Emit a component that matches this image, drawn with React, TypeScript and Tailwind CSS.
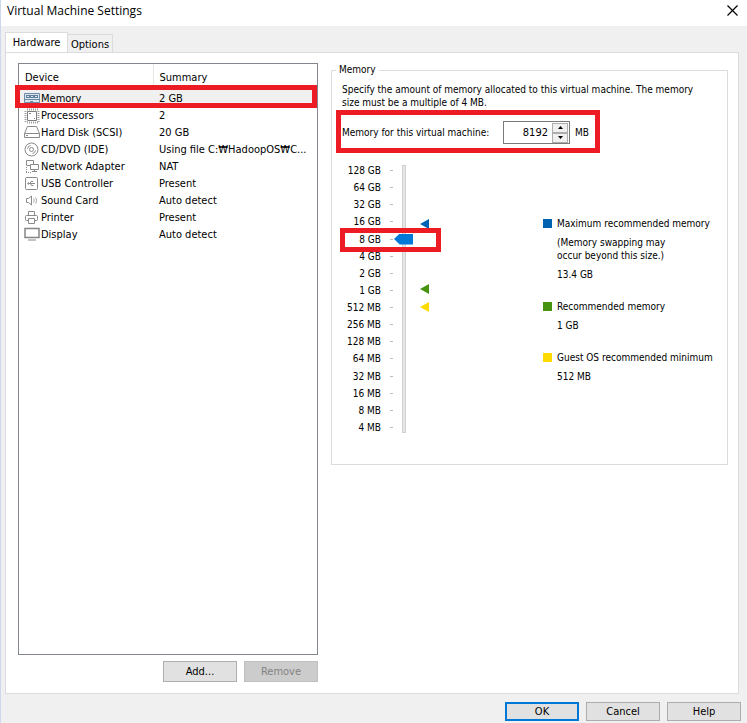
import { useState } from "react";
import type { ReactNode } from "react";

type Device = {
  name: string;
  summary: string;
  icon: ReactNode;
};

const devices: Device[] = [
  {
    name: "Memory",
    summary: "2 GB",
    icon: (
      <>
        <path d="M.5 2.500h15v9H.5z" fill="#dbe7f0" stroke="#6d8aa5" />
        <path d="M2 4h12v3H2z" fill="#5f7f9c" />
        <path d="M3 5h2v1H3zM7 5h2v1H7zM11 5h2v1h-2z" fill="#dbe7f0" />
        <path d="M1 8.500h14M6 10.500h3" stroke="#6d8aa5" />
      </>
    ),
  },
  {
    name: "Processors",
    summary: "2",
    icon: (
      <g fill="none">
        <path d="M3 1.500h11M3 14.500h11" stroke="#a0a0a0" strokeWidth="2" strokeDasharray="1 1" />
        <path d="M1.500 3v11M14.500 3v11" stroke="#a0a0a0" strokeWidth="2" strokeDasharray="1 1" />
        <path d="M3.500 3.500h9v9h-9z" fill="#fff" stroke="#808080" />
        <path d="M5 5.500h2M10 10.500h1" stroke="#808080" />
      </g>
    ),
  },
  {
    name: "Hard Disk (SCSI)",
    summary: "20 GB",
    icon: (
      <g stroke="#8a8a8a" fill="#fff">
        <path d="M3.500 1.500h9l3 7v4H.5v-4z" />
        <path d="M.5 8.500h15M2 10.500h2" />
      </g>
    ),
  },
  {
    name: "CD/DVD (IDE)",
    summary: "Using file C:₩HadoopOS₩C...",
    icon: (
      <g stroke="#8a8a8a" fill="none">
        <circle cx="7.500" cy="7.500" r="6.500" />
        <circle cx="7.500" cy="7.500" r="2" />
        <path d="M3.500 6.500a4 4 0 0 1 3-3M11.500 8.500a4 4 0 0 1-3 3" />
      </g>
    ),
  },
  {
    name: "Network Adapter",
    summary: "NAT",
    icon: (
      <g stroke="#8a8a8a" fill="none">
        <path d="M2.500 1.500h7v5h-7z" />
        <path d="M6.500 5.500h8v5h-8z" fill="#fff" />
        <path d="M10.500 11v2M8 12.500h5" />
        <path d="M2.500 8v5M2 13.500h6" strokeDasharray="1 1" />
      </g>
    ),
  },
  {
    name: "USB Controller",
    summary: "Present",
    icon: (
      <g stroke="#8a8a8a" fill="none">
        <rect x="1.500" y="1.500" width="12" height="12" rx="1" />
        <path d="M4 7.500h7M6 7.500l1-2h2M6.500 7.500l1 2h2" />
        <circle cx="4.500" cy="7.500" r=".7" fill="#8a8a8a" />
      </g>
    ),
  },
  {
    name: "Sound Card",
    summary: "Auto detect",
    icon: (
      <g stroke="#8a8a8a" fill="none">
        <path d="M2.500 5.500v4h2l3 2.500V3L4.500 5.500z" />
        <path d="M9.500 5.500c.8 1 .8 3 0 4M11.500 4.500c1.300 1.600 1.300 4.400 0 6" stroke="#a5a5a5" />
      </g>
    ),
  },
  {
    name: "Printer",
    summary: "Present",
    icon: (
      <g stroke="#8a8a8a" fill="#fff">
        <path d="M4.500 5.500v-4h6v4" />
        <rect x="1.500" y="5.500" width="12" height="5" rx="1" />
        <path d="M4.500 8.500h6v5h-6z" />
      </g>
    ),
  },
  {
    name: "Display",
    summary: "Auto detect",
    icon: (
      <g stroke="#858585" fill="#fff">
        <path d="M1 1.500h14v9H1z" strokeWidth="1.500" />
        <path d="M4 13h8" />
      </g>
    ),
  },
];

const sizes = [
  "128 GB", "64 GB", "32 GB", "16 GB", "8 GB", "4 GB", "2 GB", "1 GB",
  "512 MB", "256 MB", "128 MB", "64 MB", "32 MB", "16 MB", "8 MB", "4 MB",
];

function Marker({ className }: { className: string }) {
  return (
    <svg viewBox="0 0 9 10" className={`w-[9px] h-[10px] ${className}`}>
      <path d="M0 5L9 0v10z" fill="currentColor" />
    </svg>
  );
}

function Button({ children, className = "", disabled }: { children: ReactNode; className?: string; disabled?: boolean }) {
  return (
    <button
      type="button"
      disabled={disabled}
      className={`w-[74px] border border-[#adadad] bg-[#e1e1e1] text-center disabled:border-[#bfbfbf] disabled:bg-[#cccccc] disabled:text-[#838383] ${className}`}
    >
      {children}
    </button>
  );
}

function DeviceList() {
  const [selected, setSelected] = useState("Memory");

  return (
    <div className="flex-1 border border-[#828790] bg-white">
      <table className="w-full table-fixed text-left">
        <thead>
          <tr className="h-[26px]">
            <th className="w-[134px] border-r border-[#e5e5e5] pl-[6px] font-normal">Device</th>
            <th className="pl-[6px] font-normal">Summary</th>
          </tr>
        </thead>
        <tbody>
          {devices.map((item) => (
            <tr
              key={item.name}
              onClick={() => setSelected(item.name)}
              className={`relative h-[17px] ${selected === item.name ? "bg-[#f0f0f0]" : ""}`}
            >
              <td className="p-0">
                <div className="flex items-center gap-px pl-[5px]">
                  <svg viewBox="0 0 16 16" className="w-4 h-4 shrink-0">{item.icon}</svg>
                  {item.name}
                </div>
                {selected === item.name && (
                  <span className="absolute -left-1 right-0 -top-[5px] -bottom-px border-[5px] border-[#ed1c24]"></span>
                )}
              </td>
              <td className="p-0 pl-[6px] whitespace-nowrap">{item.summary}</td>
            </tr>
          ))}
        </tbody>
      </table>
    </div>
  );
}

function MemoryPanel() {
  const [memory, setMemory] = useState("8192");
  const level = Math.round(Math.log2(Number(memory) || 4)) - 2;

  const step = (amount: number) => setMemory(String(Number(memory) + amount));

  return (
    <fieldset className="flex-1 min-w-0 self-start border border-[#dcdcdc] pl-[10px] pr-3 pb-[30px] text-[10px] leading-[13px]">
      <legend className="-ml-[6px] px-[3px] leading-[14px]">Memory</legend>
      <p className="pt-[6px] pr-2">
        Specify the amount of memory allocated to this virtual machine. The memory size must be a multiple of 4 MB.
      </p>

      <div className="relative mt-3 flex w-fit items-center">
        <label htmlFor="memory" className="w-[161px] whitespace-nowrap">Memory for this virtual machine:</label>
        <div className="flex h-[23px] w-[67px] items-center border border-[#7a7a7a] bg-white pr-px">
          <input
            id="memory"
            type="text"
            value={memory}
            onChange={(e) => setMemory(e.target.value)}
            className="w-full min-w-0 flex-1 pr-1 text-right text-[11px] outline-none"
          />
          <div className="flex w-4 flex-col">
            <button type="button" aria-label="Increase" onClick={() => step(4)} className="flex h-[10px] items-center justify-center border border-[#adadad] bg-[#f0f0f0]">
              <svg viewBox="0 0 5 3" className="h-[3px] w-[5px]"><path d="M0 3L2.500 0 5 3z" /></svg>
            </button>
            <button type="button" aria-label="Decrease" onClick={() => step(-4)} className="flex h-[10px] items-center justify-center border border-[#adadad] bg-[#f0f0f0]">
              <svg viewBox="0 0 5 3" className="h-[3px] w-[5px]"><path d="M0 0h5L2.500 3z" /></svg>
            </button>
          </div>
        </div>
        <span className="ml-[5px] w-[19px]">MB</span>
        <span className="pointer-events-none absolute -left-[6px] -right-[6px] -top-[11px] -bottom-[9px] border-[5px] border-[#ed1c24]"></span>
      </div>

      <div className="relative mt-5 flex">
        <div className="flex h-[270px] w-[39px] shrink-0 flex-col justify-between text-right whitespace-nowrap">
          {sizes.map((size) => (
            <span key={size}>{size}</span>
          ))}
        </div>
        <div className="ml-2 flex h-[270px] w-1 shrink-0 flex-col items-end justify-between py-[6px]">
          {sizes.map((size) => (
            <span key={size} className="h-px w-[3px] bg-[#bdbdbd]"></span>
          ))}
        </div>
        <div className="ml-px mt-px grid h-[268px] w-[19px] shrink-0">
          <span className="col-start-1 row-start-1 w-1 justify-self-center border border-[#d0d0d0] bg-[#e7e7e7]"></span>
          <input
            type="range"
            aria-label="Memory size"
            min={0}
            max={15}
            value={level}
            onChange={(e) => setMemory(String(2 ** (Number(e.target.value) + 2)))}
            className="col-start-1 row-start-1 h-[268px] w-[19px] appearance-none bg-transparent [direction:rtl] [writing-mode:vertical-lr] [&::-webkit-slider-thumb]:h-[11px] [&::-webkit-slider-thumb]:w-[19px] [&::-webkit-slider-thumb]:appearance-none [&::-webkit-slider-thumb]:bg-[#0078d7] [&::-webkit-slider-thumb]:[clip-path:polygon(0_50%,30%_0,100%_0,100%_100%,30%_100%)]"
          />
        </div>
        <div className="ml-[7px] flex shrink-0 flex-col">
          <Marker className="mt-[55px] text-[#0063b1]" />
          <Marker className="mt-[55px] text-[#47920f]" />
          <Marker className="mt-2 text-[#fddb00]" />
        </div>
        <div className="ml-[114px] pt-[53px] whitespace-nowrap">
          <div className="flex items-center gap-[5px]">
            <span className="h-[9px] w-[9px] bg-[#0063b1]"></span>Maximum recommended memory
          </div>
          <p className="mt-[6px] pl-[14px]">(Memory swapping may<br />occur beyond this size.)</p>
          <p className="mt-[6px] pl-[14px]">13.4 GB</p>
          <div className="mt-[19px] flex items-center gap-[5px]">
            <span className="h-[9px] w-[9px] bg-[#47920f]"></span>Recommended memory
          </div>
          <p className="mt-[6px] pl-[14px]">1 GB</p>
          <div className="mt-[19px] flex items-center gap-[5px]">
            <span className="h-[9px] w-[9px] bg-[#fddb00]"></span>Guest OS recommended minimum
          </div>
          <p className="mt-[6px] pl-[14px]">512 MB</p>
        </div>
        <span className="pointer-events-none absolute -left-[2px] top-16 h-6 w-[101px] border-[5px] border-[#ed1c24]"></span>
      </div>
    </fieldset>
  );
}

function App() {
  return (
    <div className="flex min-h-screen flex-col border-l border-[#ccd8ec] bg-[#f0f0f0] font-['DejaVu_Sans_Condensed','Noto_Sans','Noto_Sans_CJK_KR',sans-serif] text-[11px] leading-[13px] text-black">
      <header className="flex h-[26px] items-start justify-between bg-white pl-[6px] pr-[9px]">
        <h1 className="pt-[2px] font-['Open_Sans',sans-serif] text-[12px] leading-[18px]">Virtual Machine Settings</h1>
        <button type="button" aria-label="Close" className="pt-[5px]">
          <svg viewBox="0 0 11 11" className="h-[11px] w-[11px]">
            <path d="M.5.5l10 10M10.500.5l-10 10" stroke="#000" strokeWidth="1.200" />
          </svg>
        </button>
      </header>

      <main className="flex flex-1 flex-col pl-1 pr-2 pt-[6px]">
        <nav className="flex items-end">
          <button type="button" className="-mb-px h-[21px] w-[63px] border border-b-0 border-[#dcdcdc] bg-white pb-px">Hardware</button>
          <button type="button" className="-ml-px h-[18px] w-[46px] border border-b-0 border-[#dcdcdc] bg-[#f0f0f0] pt-px">Options</button>
        </nav>

        <section className="flex flex-1 gap-[13px] border border-[#dcdcdc] bg-white pl-3 pr-[10px] pt-[10px] pb-[11px]">
          <div className="flex w-[300px] flex-col">
            <DeviceList />
            <div className="mt-[6px] flex justify-end gap-[7px]">
              <Button className="h-[21px]">Add...</Button>
              <Button className="h-[21px]" disabled>Remove</Button>
            </div>
          </div>
          <MemoryPanel />
        </section>
      </main>

      <footer className="flex justify-end gap-[7px] pt-2 pr-[6px] pb-[2px]">
        <Button className="h-[19px] outline-2 -outline-offset-2 outline-[#0078d7]">OK</Button>
        <Button className="h-[19px]">Cancel</Button>
        <Button className="h-[19px]">Help</Button>
      </footer>
    </div>
  );
}

export default App;
